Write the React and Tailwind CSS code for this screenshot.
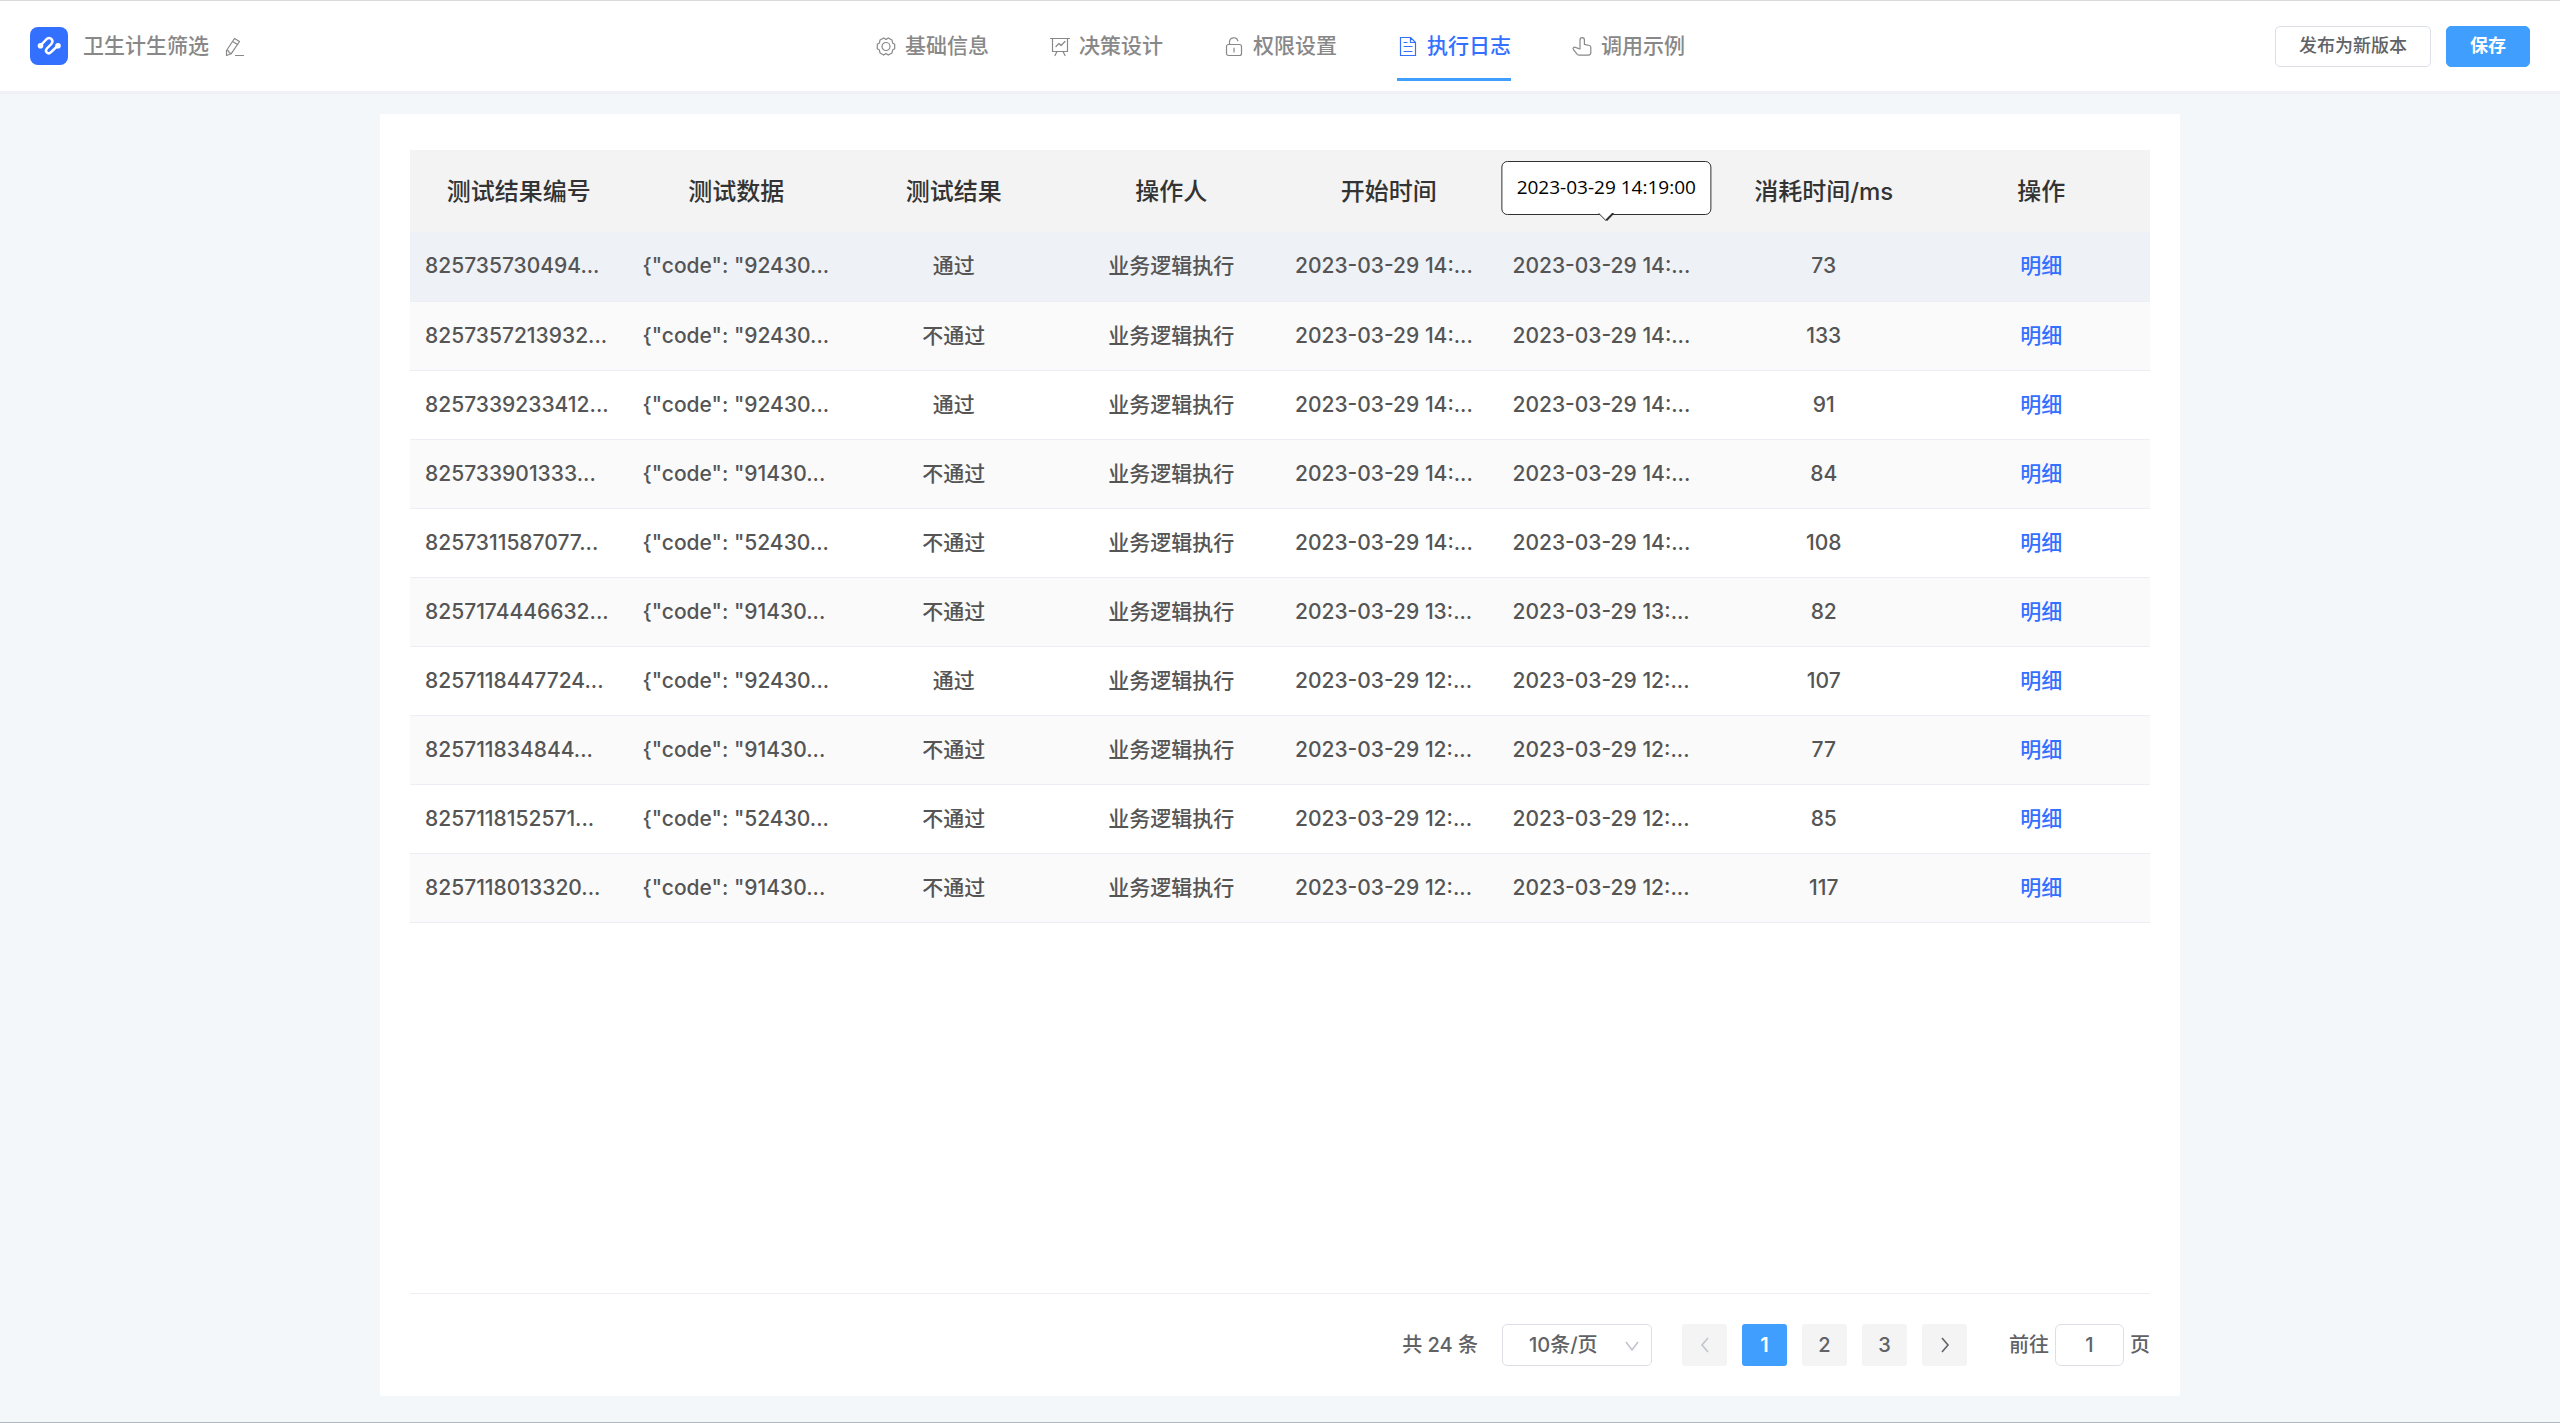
import React, { useState } from 'react';

const tabs = [
  { id: 'base', label: '基础信息', icon: GearIcon },
  { id: 'design', label: '决策设计', icon: BoardIcon },
  { id: 'auth', label: '权限设置', icon: LockIcon },
  { id: 'log', label: '执行日志', icon: DocIcon },
  { id: 'demo', label: '调用示例', icon: HandIcon },
];

// The end time column is named by its aria-label, the row tooltip opens over it
const columns = [
  { key: 'id', title: '测试结果编号' },
  { key: 'data', title: '测试数据' },
  { key: 'result', title: '测试结果' },
  { key: 'user', title: '操作人' },
  { key: 'start', title: '开始时间' },
  { key: 'end', label: '结束时间' },
  { key: 'cost', title: '消耗时间/ms' },
  { key: 'action', title: '操作' },
];

const logs = [
  { id: '825735730494...', data: '{"code": "92430...', result: '通过', time: '2023-03-29 14:...', cost: 73 },
  { id: '8257357213932...', data: '{"code": "92430...', result: '不通过', time: '2023-03-29 14:...', cost: 133 },
  { id: '8257339233412...', data: '{"code": "92430...', result: '通过', time: '2023-03-29 14:...', cost: 91 },
  { id: '825733901333...', data: '{"code": "91430...', result: '不通过', time: '2023-03-29 14:...', cost: 84 },
  { id: '8257311587077...', data: '{"code": "52430...', result: '不通过', time: '2023-03-29 14:...', cost: 108 },
  { id: '8257174446632...', data: '{"code": "91430...', result: '不通过', time: '2023-03-29 13:...', cost: 82 },
  { id: '8257118447724...', data: '{"code": "92430...', result: '通过', time: '2023-03-29 12:...', cost: 107 },
  { id: '825711834844...', data: '{"code": "91430...', result: '不通过', time: '2023-03-29 12:...', cost: 77 },
  { id: '8257118152571...', data: '{"code": "52430...', result: '不通过', time: '2023-03-29 12:...', cost: 85 },
  { id: '8257118013320...', data: '{"code": "91430...', result: '不通过', time: '2023-03-29 12:...', cost: 117 },
];

function Icon({ children }) {
  return (
    <svg
      className="w-[21px] h-[21px] shrink-0"
      viewBox="0 0 21 21"
      fill="none"
      stroke="currentColor"
      strokeWidth="1.2"
      strokeLinejoin="round"
      strokeLinecap="round"
      aria-hidden="true"
    >
      {children}
    </svg>
  );
}

function GearIcon() {
  return (
    <Icon>
      <path d="M19.7 8.3v4.4l-2.1 1.2-.6 3.1-3.7 2.1-2.3-1.6-2.3 1.6L5 17l-.6-3.1-2.1-1.2V8.3l2.1-1.2L5 4l3.7-2.1L11 3.5l2.3-1.6L17 4l.6 3.1z" />
      <circle cx="11" cy="10.5" r="4" />
    </Icon>
  );
}

function BoardIcon() {
  return (
    <Icon>
      <path d="M1.5 2.5h19M3.5 2.5v13h15v-13M8 15.5l-2 4M14 15.5l2 4M7 10.5l3-3 2 2 4-4" />
    </Icon>
  );
}

function LockIcon() {
  return (
    <Icon>
      <rect x="3.5" y="8.5" width="15" height="11" rx="2" />
      <path d="M6.5 8.5V6a4.3 4.3 0 0 1 8.4-1.2M11 12v4" />
    </Icon>
  );
}

function DocIcon() {
  return (
    <Icon>
      <path d="M3.5 1.5h10l5 5v13h-15zM13.5 1.5v5h5M7 6.5h3M7 10.5h8M7 15.5h8" />
    </Icon>
  );
}

function HandIcon() {
  return (
    <Icon>
      <path d="M9 13V3.9a2.2 2.2 0 0 1 4.4 0v4.4l5 1.2a1.9 1.9 0 0 1 1.4 2v5.3a2.4 2.4 0 0 1-2.3 2.3H8.2a2.6 2.6 0 0 1-1.9-.8L2.6 13.8a1.7 1.7 0 0 1 0-2.3c.7-.6 1.7-.5 2.4.1L9 13" />
    </Icon>
  );
}

function PencilIcon() {
  return (
    <Icon>
      <path d="M10.5 2.5l5 3L7.3 17.7l-4.8 1.8v-5zM8.6 5.4l4.9 3M2.5 14.5l2 .4.8 1.8 2 .9M11.5 19.5h8" />
    </Icon>
  );
}

function Logo() {
  return (
    <svg className="w-[38px] h-[38px]" viewBox="0 0 38 38" fill="none" aria-hidden="true">
      <rect width="38" height="38" rx="8" fill="#3370ff" />
      <path
        d="M10.5 18.5l5.7-6c1.9-1.9 4-1.9 5.3-.4 1.4 1.6 1.2 3.3-.2 4.9l-4.4 4.5c-1.2 1.5-1.3 2.8-.2 3.9 1.2 1.2 2.8 1.2 4.3-.2l7-6.7"
        stroke="#fff"
        strokeWidth="2.5"
        strokeLinecap="round"
      />
      <circle cx="10.5" cy="18.7" r="2.8" fill="#fff" />
      <circle cx="28" cy="18.7" r="2.8" fill="#fff" />
    </svg>
  );
}

function Chevron({ d, size }) {
  return (
    <svg className={size} viewBox="0 0 16 16" fill="none" stroke="currentColor" strokeWidth="1.6" aria-hidden="true">
      <path d={d} />
    </svg>
  );
}

const Header = ({ active, onChange }) => (
  <header className="grid grid-cols-[1fr_auto_1fr] items-center h-[94px] px-[30px] bg-white border-t border-t-[#d9d9d9] border-b-3 border-b-[#eff1f6]">
    <div className="flex items-center text-[#888888]">
      <Logo />
      <h1 className="ml-[15px] mr-[15px]">卫生计生筛选</h1>
      <button type="button" aria-label="编辑名称">
        <PencilIcon />
      </button>
    </div>

    <nav className="flex gap-[60px] h-full">
      {tabs.map(({ id, label, icon: TabIcon }) => (
        <a
          key={id}
          href={`#${id}`}
          onClick={() => onChange(id)}
          className={`flex items-center gap-[9px] h-20 pt-[13px] border-b-3 ${
            active === id ? 'text-[#3370ff] border-[#409eff]' : 'text-[#888888] border-transparent'
          }`}
        >
          <TabIcon />
          {label}
        </a>
      ))}
    </nav>

    <div className="flex justify-end gap-[15px] text-lg">
      <button type="button" className="h-[41px] px-[23px] leading-none rounded-[5px] border border-[#dcdfe6] text-[#606266]">
        发布为新版本
      </button>
      <button type="button" className="h-[41px] px-[23px] leading-none rounded-[5px] border border-[#409eff] bg-[#409eff] text-white font-semibold">
        保存
      </button>
    </div>
  </header>
);

const Tooltip = ({ text }) => (
  <div
    role="tooltip"
    className="absolute left-1/2 bottom-full mb-[37px] -translate-x-1/2 h-[54px] px-[14px] pb-[3px] flex items-center whitespace-nowrap rounded-md border border-[#303133] bg-white text-black text-[19px] font-normal font-['Open_Sans','Noto_Sans',sans-serif]"
  >
    {text}
    <svg className="absolute top-full left-1/2 -translate-x-1/2 -mt-px w-4 h-2" viewBox="0 0 16 8" aria-hidden="true">
      <path d="M0 0h16L8 8z" fill="#fff" />
      <path d="M0 0l8 8" stroke="#303133" fill="none" />
      <path d="M15 0L8 7.3" stroke="#303133" strokeWidth="2" fill="none" />
    </svg>
  </div>
);

const LogTable = () => (
  <table className="w-full table-fixed text-center text-[#555555]">
    <thead>
      <tr className="h-[82px] bg-[#f3f3f3] text-2xl text-[#333333]">
        {columns.map((col) => (
          <th key={col.key} scope="col" aria-label={col.label} className="pt-0.5 font-medium">
            {col.title}
          </th>
        ))}
      </tr>
    </thead>
    <tbody>
      {logs.map((log, i) => (
        <tr
          key={log.id}
          className={`h-[69px] border-b border-[#ebeef5] ${i === 0 ? 'bg-[#eef1f6]' : i % 2 ? 'bg-[#fafafa]' : 'bg-white'}`}
        >
          <td className="px-[15px] text-left whitespace-nowrap">{log.id}</td>
          <td className="px-[15px] text-left whitespace-nowrap">{log.data}</td>
          <td>{log.result}</td>
          <td>业务逻辑执行</td>
          <td className="px-[15px] text-left whitespace-nowrap">{log.time}</td>
          <td className="px-[15px] text-left whitespace-nowrap">
            <div className="relative">
              {log.time}
              {i === 0 && <Tooltip text="2023-03-29 14:19:00" />}
            </div>
          </td>
          <td>{log.cost}</td>
          <td>
            <a href="#detail" className="text-[#3370ff]">
              明细
            </a>
          </td>
        </tr>
      ))}
    </tbody>
  </table>
);

const Pagination = () => {
  const [page, setPage] = useState(1);

  return (
    <div className="flex items-center justify-end h-[103px] border-t border-[#ebeef5] text-xl text-[#606266]">
      <span>共 24 条</span>
      <div className="relative ml-6">
        <select
          aria-label="每页条数"
          className="appearance-none w-[150px] h-[42px] pl-[26px] rounded-[5px] border border-[#dcdfe6] bg-white"
        >
          <option>10条/页</option>
        </select>
        <span className="absolute right-3 top-[14px] text-[#c0c4cc] pointer-events-none">
          <Chevron size="w-4 h-4" d="M2 4l6 8 6-8" />
        </span>
      </div>

      <div className="flex gap-[15px] ml-[30px]">
        <button
          type="button"
          aria-label="上一页"
          disabled={page === 1}
          onClick={() => setPage(page - 1)}
          className="grid place-items-center w-[45px] h-[42px] rounded-[3px] bg-[#f4f4f5] disabled:text-[#c0c4cc]"
        >
          <Chevron size="w-4 h-4" d="M11 1L5 8l6 7" />
        </button>
        {[1, 2, 3].map((n) => (
          <button
            key={n}
            type="button"
            onClick={() => setPage(n)}
            className={`w-[45px] h-[42px] rounded-[3px] ${
              n === page ? 'bg-[#409eff] text-white font-semibold' : 'bg-[#f4f4f5]'
            }`}
          >
            {n}
          </button>
        ))}
        <button
          type="button"
          aria-label="下一页"
          disabled={page === 3}
          onClick={() => setPage(page + 1)}
          className="grid place-items-center w-[45px] h-[42px] rounded-[3px] bg-[#f4f4f5] disabled:text-[#c0c4cc]"
        >
          <Chevron size="w-4 h-4" d="M5 1l6 7-6 7" />
        </button>
      </div>

      <label className="flex items-center gap-[6px] ml-[42px]">
        前往
        <input
          type="text"
          value={page}
          onChange={(e) => setPage(Number(e.target.value) || 1)}
          className="w-[69px] h-[42px] rounded-[6px] border border-[#dcdfe6] text-center"
        />
        页
      </label>
    </div>
  );
};

const App = () => {
  const [active, setActive] = useState('log');

  return (
    <div className="flex flex-col min-h-screen bg-[#f3f7fa] border-b border-[#b0b7bf] text-[21px] leading-7 font-medium font-['Inter','Noto_Sans_CJK_SC',sans-serif]">
      <Header active={active} onChange={setActive} />
      <main className="flex flex-col flex-1 w-full max-w-[1800px] mx-auto mt-5 mb-[26px] px-[30px] pt-9 bg-white">
        <div className="flex-1">
          <LogTable />
        </div>
        <Pagination />
      </main>
    </div>
  );
};

export default App;
